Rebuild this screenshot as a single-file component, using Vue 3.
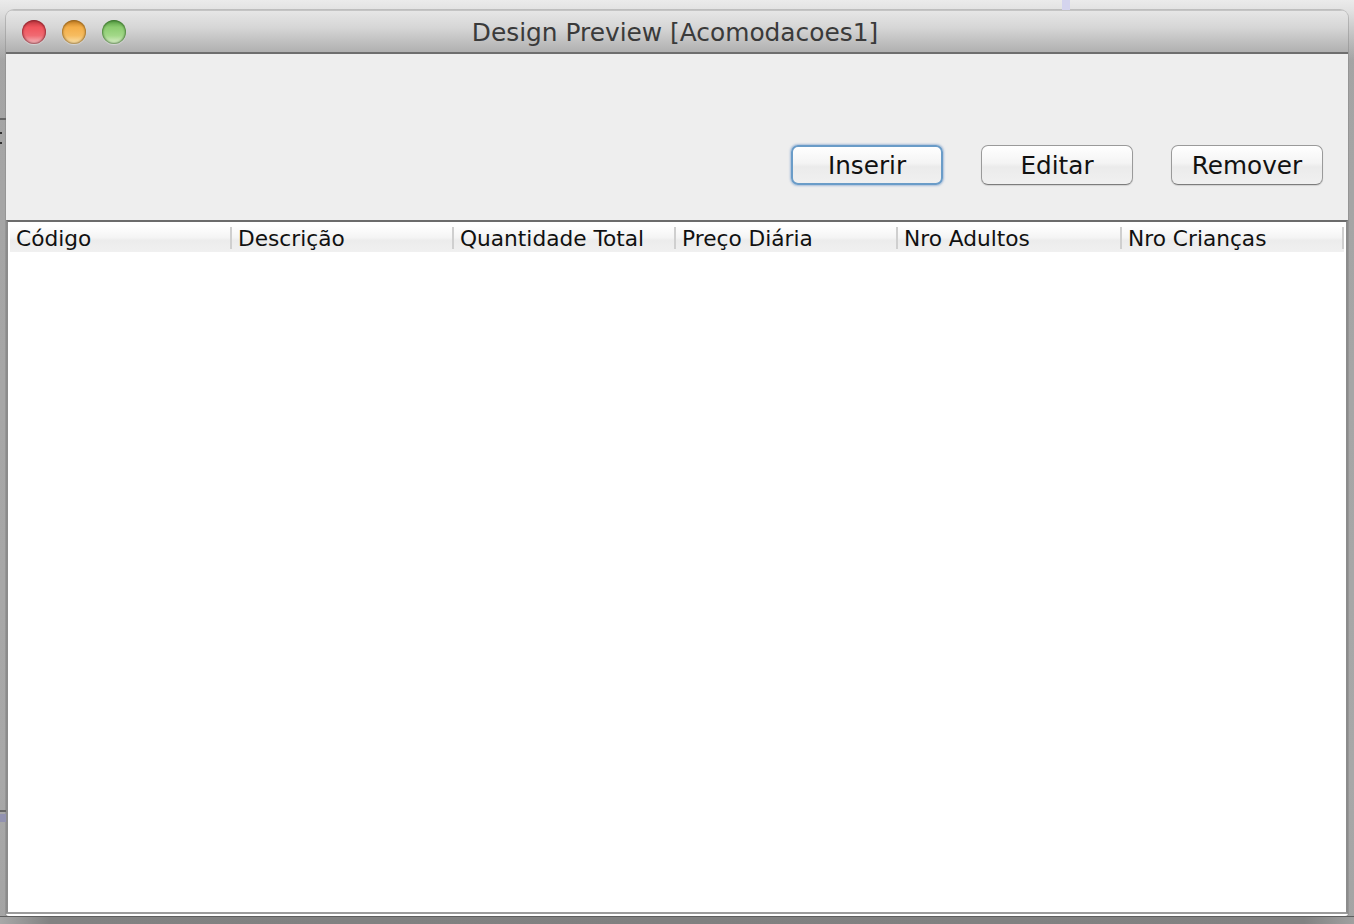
<template>
  <div class="desktop">
    <span class="mark mark-top"></span>
    <span class="mark mark-left1"></span>
    <span class="mark mark-dot1"></span>
    <span class="mark mark-dot2"></span>
    <span class="mark mark-left3"></span>
    <span class="mark mark-left4"></span>

    <div class="window">
      <div class="titlebar">
        <div class="lights">
          <span class="light red"></span>
          <span class="light orange"></span>
          <span class="light green"></span>
        </div>
        <span class="title">Design Preview [Acomodacoes1]</span>
      </div>

      <div class="toolbar">
        <button
          v-for="b in buttons"
          :key="b.label"
          class="btn"
          :class="{ focused: b.focused }"
        >{{ b.label }}</button>
      </div>

      <div class="table">
        <div class="thead">
          <div v-for="c in columns" :key="c" class="th">{{ c }}</div>
        </div>
      </div>
    </div>
    <div class="bottom-shade"></div>
  </div>
</template>

<script setup>
const buttons = [
  { label: 'Inserir', focused: true },
  { label: 'Editar' },
  { label: 'Remover' }
]

const columns = [
  'Código',
  'Descrição',
  'Quantidade Total',
  'Preço Diária',
  'Nro Adultos',
  'Nro Crianças'
]
</script>

<style>
html, body {
  margin: 0;
  background: #b0b0b0;
}
</style>

<style scoped>
.desktop {
  position: relative;
  box-sizing: border-box;
  width: 1354px;
  height: 924px;
  padding: 10px 6px 0;
  overflow: hidden;
  font-family: "DejaVu Sans", "Liberation Sans", sans-serif;
  background:
    linear-gradient(180deg, #ebebeb 0, #e2e2e2 10px, rgba(226, 226, 226, 0) 60px),
    linear-gradient(180deg, #a4a4a4 0, #a8a8a8 780px, #a4a4a4 924px);
}

.mark {
  position: absolute;
  display: block;
}

.mark-top {
  left: 1062px;
  top: 0;
  width: 8px;
  height: 10px;
  background: #d4d4ee;
}

.mark-left1 {
  left: 0;
  top: 118px;
  width: 6px;
  height: 2px;
  background: #666;
}

.mark-dot1 {
  left: 0;
  top: 132px;
  width: 2px;
  height: 2px;
  background: #333;
}

.mark-dot2 {
  left: 0;
  top: 142px;
  width: 2px;
  height: 2px;
  background: #333;
}

.mark-left3 {
  left: 0;
  top: 810px;
  width: 6px;
  height: 2px;
  background: #666;
}

.mark-left4 {
  left: 0;
  top: 814px;
  width: 6px;
  height: 8px;
  background: #9292b0;
}

.window {
  display: flex;
  flex-direction: column;
  box-sizing: border-box;
  height: 906px;
  border-radius: 8px 8px 3px 3px;
  overflow: hidden;
  box-shadow: 0 0 0 1px rgba(120, 120, 120, .35);
}

/* sombra embaixo da janela, mais clara nos cantos */
.bottom-shade {
  height: 8px;
  margin: 0 -6px;
  background: linear-gradient(90deg, #a8a8a8 0, #828282 50px, #808080 50%, #828282 calc(100% - 50px), #a0a0a0 100%);
  border-top: 1px solid #5e5e5e;
  box-sizing: border-box;
}

.titlebar {
  position: relative;
  display: flex;
  align-items: center;
  justify-content: center;
  flex: none;
  box-sizing: border-box;
  height: 44px;
  padding: 2px 4px 0 0;
  border-top: 1px solid #c4c4c4;
  border-bottom: 2px solid #6e6e6e;
  background: linear-gradient(180deg, #e6e6e6 0, #d6d6d6 40%, #b0b0b0 100%);
}

.lights {
  position: absolute;
  left: 16px;
  top: 9px;
  display: flex;
  gap: 16px;
}

.light {
  display: block;
  width: 24px;
  height: 24px;
  border-radius: 50%;
  box-sizing: border-box;
}

.red {
  background: linear-gradient(180deg, #b8343c 0, #f0545c 30%, #f06a72 65%, #f4c2c6 100%);
  box-shadow: inset 0 0 2px 1px rgba(110, 20, 30, .7), 0 1px 1px rgba(255, 255, 255, .4);
}

.orange {
  background: linear-gradient(180deg, #c07a20 0, #f4ae48 30%, #f6bc60 65%, #fae6b4 100%);
  box-shadow: inset 0 0 2px 1px rgba(120, 80, 20, .7), 0 1px 1px rgba(255, 255, 255, .4);
}

.green {
  background: linear-gradient(180deg, #529a40 0, #8ccc70 30%, #a2d888 65%, #e0f0d0 100%);
  box-shadow: inset 0 0 2px 1px rgba(40, 90, 30, .7), 0 1px 1px rgba(255, 255, 255, .4);
}

.title {
  font-size: 24.85px;
  line-height: 40px;
  color: #3a3a3a;
  white-space: nowrap;
}

.toolbar {
  display: flex;
  justify-content: flex-end;
  flex: none;
  gap: 38px;
  box-sizing: border-box;
  height: 166px;
  padding: 91px 25px 0 0;
  background: #eeeeee;
}

.btn {
  width: 152px;
  height: 40px;
  padding: 0;
  border: 1px solid #9a9a9a;
  border-bottom-color: #7c7c7c;
  border-radius: 7px;
  font-family: inherit;
  font-size: 24.7px;
  color: #111;
  background: linear-gradient(180deg, #ffffff 0, #f4f4f4 45%, #ebebeb 55%, #f0f0f0 100%);
  box-shadow: 0 1px 1px rgba(0, 0, 0, .12);
}

.btn.focused {
  border: 2px solid #6a9cc8;
  box-shadow: 0 0 2px 1px rgba(110, 150, 200, .55);
}

.table {
  flex: 1;
  box-sizing: border-box;
  padding: 4px 0 0 2px;
  border-top: 2px solid #6c6c6c;
  border-left: 2px solid #8c8c8c;
  border-right: 2px solid #8c8c8c;
  border-bottom: 2px solid #9c9c9c;
  box-shadow: 0 2px 0 #ffffff;
  margin-bottom: 2px;
  background: #ffffff;
}

.thead {
  display: grid;
  grid-template-columns: 222px 222px 222px 222px 224px 222px;
  width: 1334px;
  height: 26px;
  background: linear-gradient(180deg, #ffffff 0, #f4f4f4 45%, #ececec 55%, #f0f0f0 100%);
}

.th {
  box-sizing: border-box;
  padding: 1px 0 0 6px;
  height: 22px;
  margin-top: 1px;
  border-right: 2px solid #cfcfcf;
  font-size: 21.7px;
  line-height: 22px;
  color: #111;
  white-space: nowrap;
}
</style>
